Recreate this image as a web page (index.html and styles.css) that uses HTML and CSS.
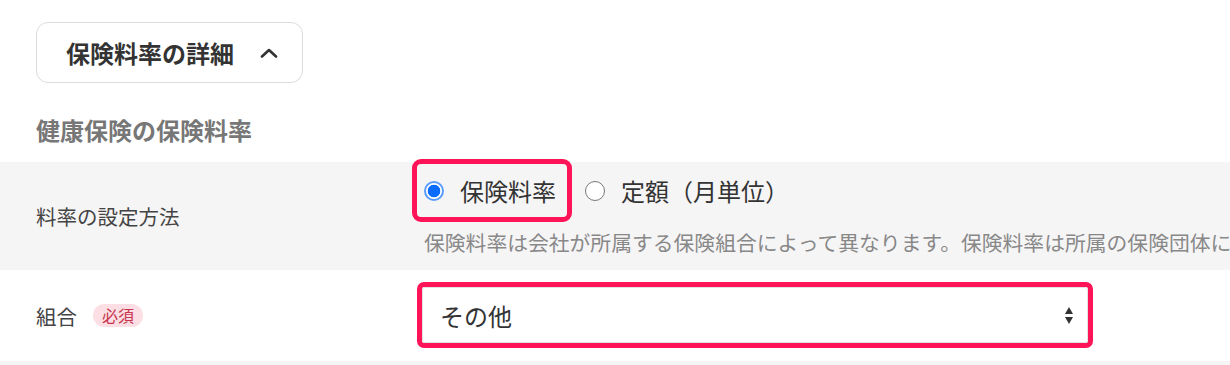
FILE: index.html
```html
<!DOCTYPE html>
<html lang="ja">
<head>
  <meta charset="UTF-8" />
  <title>保険料率の詳細</title>
  <link rel="stylesheet" href="styles.css">
</head>
<body>
  <div class="top">
    <button class="toggle" type="button">
      保険料率の詳細
      <svg class="chevron" width="18" height="10" viewBox="0 0 18 10">
        <polyline points="2,8.5 9,2 16,8.5" fill="none" stroke="#333" stroke-width="2.6" stroke-linecap="round" stroke-linejoin="round"/>
      </svg>
    </button>
    <h2 class="heading">健康保険の保険料率</h2>
  </div>

  <div class="row gray">
    <div class="label">料率の設定方法</div>
    <div class="field">
      <div class="options">
        <label class="option mark">
          <input type="radio" name="method" checked>
          <span>保険料率</span>
        </label>
        <label class="option">
          <input type="radio" name="method">
          <span>定額（月単位）</span>
        </label>
      </div>
      <p class="help">保険料率は会社が所属する保険組合によって異なります。保険料率は所属の保険団体に</p>
    </div>
  </div>

  <div class="row second">
    <div class="label">組合 <span class="badge">必須</span></div>
    <div class="field">
      <div class="select-wrap">
        <select class="select">
          <option>その他</option>
        </select>
        <svg class="arrows" width="10" height="18" viewBox="0 0 10 18">
          <polygon points="5,1 9,8 1,8" fill="#333"/>
          <polygon points="1,11 9,11 5,18" fill="#333"/>
        </svg>
      </div>
    </div>
  </div>

  <div class="row gray rest"></div>
</body>
</html>
```

FILE: styles.css
```css
:root {
  --pink: #ff1458;
  --text: #333;
  --label: #444;
  --muted: #888;
  --gray-bg: #f6f5f6;
}

* {
  box-sizing: border-box;
  margin: 0;
  padding: 0;
}

body {
  font-family: "Noto Sans CJK JP", "Noto Sans", sans-serif;
  color: var(--text);
  background: #fff;
  overflow: hidden;
}

.top {
  padding: 22px 0 0 36px;
}

.toggle {
  display: inline-flex;
  align-items: center;
  gap: 26px;
  height: 61px;
  padding: 0 24px 0 29px;
  font-family: inherit;
  font-size: 24px;
  font-weight: 700;
  color: var(--text);
  background: #fff;
  border: 1.5px solid #dcdcdc;
  border-radius: 12px;
}

.heading {
  margin-top: 29px;
  margin-bottom: 14px;
  font-size: 24px;
  line-height: 36px;
  font-weight: 700;
  color: #777;
}

.row {
  display: grid;
  grid-template-columns: 381px 1fr;
  padding-left: 36px;
}

.gray {
  background: var(--gray-bg);
}

.row .label {
  display: flex;
  align-items: center;
  gap: 16px;
  font-size: 20.5px;
  color: var(--label);
}

.gray .field {
  padding: 2px 0 12px;
  min-width: 0;
}

.options {
  display: flex;
  align-items: center;
}

.option {
  display: inline-flex;
  align-items: center;
  gap: 16px;
  height: 53px;
  font-size: 24px;
  color: var(--text);
}

.option + .option {
  margin-left: 18px;
}

.mark {
  padding: 0 11px 0 7px;
  outline: 5px solid var(--pink);
  border-radius: 4px;
}

.option input {
  appearance: none;
  width: 20px;
  height: 20px;
  border: 1.5px solid #777;
  border-radius: 50%;
  background: #fff;
}

.option input:checked {
  border: 2px solid #5a9cfb;
  background: radial-gradient(circle, #0a6cff 0 6px, #fff 6.6px);
}

.help {
  margin-top: 10px;
  padding-left: 7px;
  font-size: 20.8px;
  line-height: 31px;
  color: var(--muted);
  white-space: nowrap;
  overflow: hidden;
}

.badge {
  display: inline-block;
  padding: 0 9px;
  height: 23px;
  line-height: 23px;
  font-size: 16px;
  color: #c7364e;
  background: #fcdfe4;
  border-radius: 12px;
}

.second {
  height: 91px;
}

.second .field {
  padding-top: 12px;
}

.select-wrap {
  position: relative;
  width: 676px;
  border: 5px solid var(--pink);
  border-radius: 7px;
}

.select {
  display: block;
  width: 100%;
  height: 56px;
  padding-left: 17px;
  appearance: none;
  font-family: inherit;
  font-size: 24px;
  color: var(--text);
  background: #fff;
  border: 1px solid #e2e2e2;
  border-radius: 3px;
}

.arrows {
  position: absolute;
  right: 14px;
  top: 19px;
}

.rest {
  height: 20px;
}
```
